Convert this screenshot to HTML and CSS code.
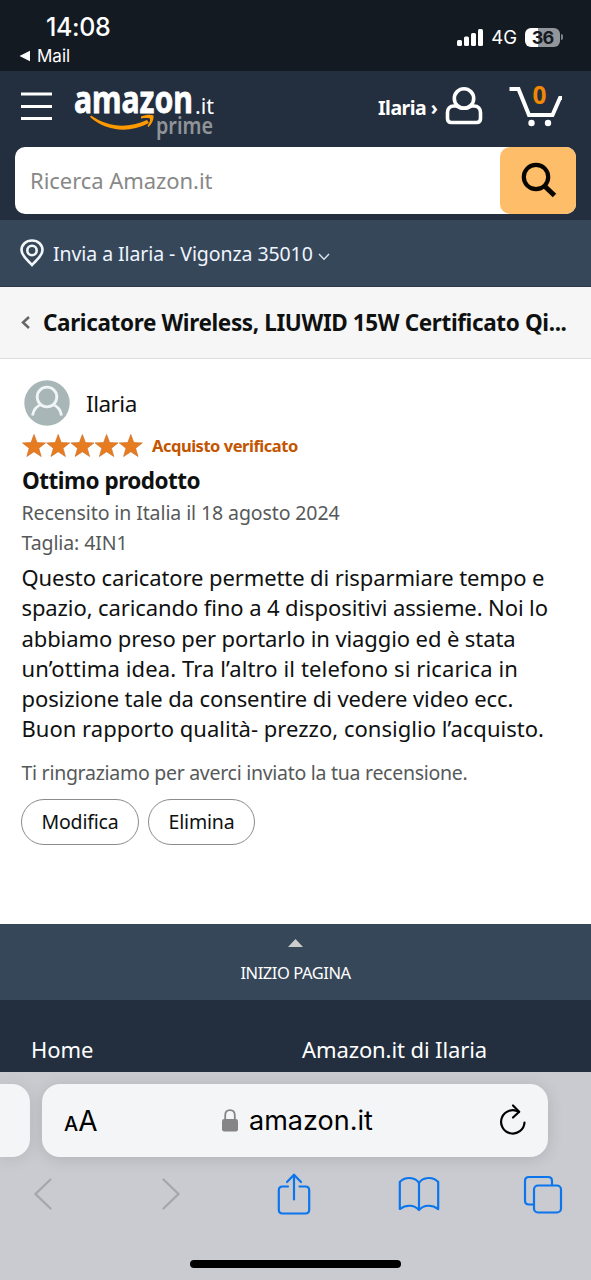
FILE: index.html
```html
<!DOCTYPE html>
<html lang="it">
<head>
<meta charset="utf-8">
<title>Amazon.it</title>
<link rel="stylesheet" href="styles.css">
</head>
<body>
<div class="status">
  <div class="status-left">
    <div class="clock">14:08</div>
    <div class="back-app"><svg width="12" height="12" viewBox="0 0 12 12"><path d="M0.5 6 L11 0.7 V11.3 Z" fill="#fff"/></svg><span>Mail</span></div>
  </div>
  <div class="status-right">
    <svg width="27" height="18" viewBox="0 0 27 18" fill="#fff"><rect x="0" y="12" width="5" height="6" rx="1.5"/><rect x="7" y="8.500" width="5" height="9.500" rx="1.500"/><rect x="14" y="5" width="5" height="13" rx="1.500"/><rect x="21" y="1" width="5" height="17" rx="1.500"/></svg>
    <span class="network">4G</span>
    <div class="battery"><span>36</span></div>
    <div class="battery-tip"></div>
  </div>
</div>

<header class="header">
  <div class="nav">
    <svg class="menu" width="31" height="29" viewBox="0 0 31 29" stroke="#fff" stroke-width="3"><path d="M0 2H31M0 14.500H31M0 26.500H31"/></svg>
    <svg class="logo" width="142" height="56" viewBox="0 0 142 56">
      <text class="logo-name" x="0" y="27" textLength="119" lengthAdjust="spacingAndGlyphs">amazon</text>
      <text class="logo-tld" x="121" y="28" textLength="19" lengthAdjust="spacingAndGlyphs">.it</text>
      <path d="M17 29.500C34 41 53 43 73 34L75 37C54 48 32 45 16 31Z" fill="#f90"/>
      <path d="M67 30.500C72 28.500 77 28.500 79.500 29.500C80 33 78 38 74.500 41L73.500 40C75.500 37 76.500 34 76 32.500C73.500 31.800 70 32 67 32.500Z" fill="#f90"/>
      <text class="logo-prime" x="82" y="48" textLength="57" lengthAdjust="spacingAndGlyphs">prime</text>
    </svg>
    <div class="account">Ilaria ›</div>
    <svg class="user" width="38" height="40" viewBox="0 0 38 40" fill="none" stroke="#fff" stroke-width="3.600"><circle cx="19" cy="12.500" r="9.700"/><path d="M11.500 20H9C5 20 2.500 22.500 2.500 26.500V32.500C2.500 35 4 36.500 6.500 36.500H31.500C34 36.500 35.500 35 35.500 32.500V26.500C35.500 22.500 33 20 29 20H26.500C22 22.700 16 22.700 11.500 20Z"/></svg>
    <svg class="cart" width="54" height="44" viewBox="0 0 54 44"><path d="M0.500 5H9.500L20 31H43.500L51 14H53" fill="none" stroke="#fff" stroke-width="4"/><circle cx="22.500" cy="39" r="3.200" fill="#fff"/><circle cx="39" cy="39" r="3.200" fill="#fff"/><text class="cart-count" x="23.500" y="20" textLength="14" lengthAdjust="spacingAndGlyphs">0</text></svg>
  </div>
  <div class="search">
    <span class="placeholder">Ricerca Amazon.it</span>
    <div class="search-button"><svg width="36" height="37" viewBox="0 0 36 37" fill="none" stroke="#080600"><circle cx="15" cy="15" r="12.200" stroke-width="4.200"/><path d="M23.500 24L33.500 33.500" stroke-width="5"/></svg></div>
  </div>
</header>

<div class="location">
  <svg width="24" height="28" viewBox="0 0 24 28" fill="none" stroke="#f2f7fa" stroke-width="2.600"><path d="M12 26C8 21.500 1.500 17 1.500 11C1.500 5.500 6 1.500 12 1.500S22.500 5.500 22.500 11C22.500 17 16 21.500 12 26Z"/><circle cx="12" cy="11.500" r="4.700"/></svg>
  <span class="location-text">Invia a Ilaria - Vigonza 35010</span>
  <svg class="chevron" width="12" height="8" viewBox="0 0 12 8" fill="none" stroke="#dce6f2" stroke-width="1.400"><path d="M1 1L6 6.300L11 1"/></svg>
</div>

<div class="product">
  <svg width="9" height="13" viewBox="0 0 9 13" fill="none" stroke="#666" stroke-width="2.500"><path d="M8 1L2 6.500L8 12"/></svg>
  <h1 class="product-title">Caricatore Wireless, LIUWID 15W Certificato Qi...</h1>
</div>

<main class="review">
  <div class="profile">
    <svg width="46" height="46" viewBox="0 0 46 46"><circle cx="23" cy="23" r="22.700" fill="#a8b6b8"/><g fill="none" stroke="#f0f6f7" stroke-width="2.800"><circle cx="23" cy="17" r="9.800"/><path d="M8.500 35.500C9.500 30 12.500 26 17.500 24.500M37.500 35.500C36.500 30 33.500 26 28.500 24.500"/></g></svg>
    <span class="name">Ilaria</span>
  </div>
  <div class="rating">
    <svg width="122" height="24" viewBox="0 0 122 24"><defs><path id="star" d="M12 0.500L15 8.600L23.500 8.900L16.800 14.200L19.200 22.500L12 17.700L4.800 22.500L7.200 14.200L0.500 8.900L9 8.600Z"/></defs><g fill="#e77b20" stroke="#cf7329" stroke-width=".7"><use href="#star"/><use href="#star" x="24.200"/><use href="#star" x="48.400"/><use href="#star" x="72.600"/><use href="#star" x="96.800"/></g></svg>
    <span class="verified">Acquisto verificato</span>
  </div>
  <h2 class="review-title">Ottimo prodotto</h2>
  <div class="meta date">Recensito in Italia il 18 agosto 2024</div>
  <div class="meta size">Taglia: 4IN1</div>
  <p class="body">Questo caricatore permette di risparmiare tempo e<br>spazio, caricando fino a 4 dispositivi assieme. Noi lo<br>abbiamo preso per portarlo in viaggio ed è stata<br><span class="loose">un’ottima idea. Tra l’altro il telefono si ricarica in</span><br>posizione tale da consentire di vedere video ecc.<br><span class="even">Buon rapporto qualità- prezzo, consiglio l’acquisto.</span></p>
  <div class="thanks">Ti ringraziamo per averci inviato la tua recensione.</div>
  <div class="actions"><button class="edit">Modifica</button><button class="delete">Elimina</button></div>
</main>

<div class="top-link">
  <svg width="15" height="8" viewBox="0 0 15 8"><path d="M0 8L7.500 0L15 8Z" fill="#ccc"/></svg>
  <span>INIZIO PAGINA</span>
</div>
<footer class="footer"><span class="home">Home</span><span class="yours">Amazon.it di Ilaria</span></footer>

<div class="browser">
  <div class="tabs">
    <div class="prev-tab"></div>
    <div class="address">
      <span class="text-size"><small>A</small>A</span>
      <div class="host"><svg width="16" height="23" viewBox="0 0 16 23"><path d="M3.200 11V6.500C3.200 3 5 1.200 8 1.200S12.800 3 12.800 6.500V11" fill="none" stroke="#858587" stroke-width="1.800"/><rect x="0" y="10" width="16" height="12.500" rx="2.200" fill="#858587"/></svg><span>amazon.it</span></div>
      <svg class="reload" width="26" height="31" viewBox="0 0 26 31" fill="none" stroke="#000" stroke-width="2.200" stroke-linecap="round" stroke-linejoin="round"><path d="M24.500 18.500A11.700 11.700 0 1 1 19 7.900"/><path d="M13 1.500L19.200 7.700L13 13.500"/></svg>
    </div>
  </div>
  <div class="toolbar">
    <svg width="18" height="32" viewBox="0 0 18 32" fill="none" stroke="#a5a7ac" stroke-width="2.300" stroke-linecap="round"><path d="M16.500 1.500L1.500 16L16.500 30.500"/></svg>
    <svg class="forward" width="18" height="32" viewBox="0 0 18 32" fill="none" stroke="#a5a7ac" stroke-width="2.300" stroke-linecap="round"><path d="M1.500 1.500L16.500 16L1.500 30.500"/></svg>
    <svg class="share" width="34" height="42" viewBox="0 0 34 42" fill="none" stroke="#0b75ed" stroke-width="2.200" stroke-linecap="round" stroke-linejoin="round"><path d="M11 13.500H5.500C3 13.500 1.800 15 1.800 17.500V36.500C1.800 39 3 40.500 5.500 40.500H28.500C31 40.500 32.200 39 32.200 36.500V17.500C32.200 15 31 13.500 28.500 13.500H22.500M17 26.500V1.800M10 9L17 1.800L24 9"/></svg>
    <svg class="book" width="42" height="36" viewBox="0 0 42 36" fill="none" stroke="#0b75ed" stroke-width="2.200" stroke-linejoin="round"><path d="M21 7C17 0.700 7 0.300 1.800 6V33C8 28.500 16 28.500 21 34C26 28.500 34 28.500 40.200 33V6C35 0.300 25 0.700 21 7V34"/></svg>
    <svg class="pages" width="40" height="39" viewBox="0 0 40 39" fill="none" stroke="#0b75ed" stroke-width="2.200"><rect x="11" y="10.500" width="27" height="27" rx="4"/><path d="M11 29.500H6C3.300 29.500 2 28.200 2 25.500V6C2 3.300 3.300 2 6 2H25C27.700 2 29 3.300 29 6V10.500"/></svg>
  </div>
  <div class="home-bar"></div>
</div>
</body>
</html>
```

FILE: styles.css
```css
* { box-sizing: border-box; }
body { margin: 0; width: 591px; height: 1280px; overflow: hidden; background: #fff; color: #0f1111; font-family: "Noto Sans", "Open Sans", sans-serif; white-space: nowrap; }
svg { display: block; flex: none; overflow: visible; }
h1, h2, p { margin: 0; }

.status { display: flex; justify-content: space-between; height: 71px; background: #141a22; color: #fff; font-family: Inter, sans-serif; }
.status-left { padding: 11px 0 0 19px; }
.clock { height: 32px; padding-left: 27px; font-size: 25px; line-height: 32px; font-weight: 500; letter-spacing: -0.4px; }
.back-app { display: flex; align-items: center; gap: 6px; height: 26px; font-size: 17px; }
.status-right { display: flex; align-items: center; height: 18px; margin: 28px 28px 0 0; }
.network { margin-left: 7px; font-size: 18.500px; }
.battery { width: 35px; height: 19px; margin-left: 8px; border-radius: 6px; background: linear-gradient(to right, #fff 36%, #92959a 36%); color: #141a22; text-align: center; font-size: 18px; line-height: 19px; font-weight: 700; letter-spacing: -0.8px; }
.battery-tip { width: 2px; height: 6px; margin-left: 1px; border-radius: 0 2px 2px 0; background: #80838a; }

.header { height: 149px; background: #232f3e; }
.nav { display: flex; align-items: flex-start; height: 76px; color: #fff; }
.menu { margin: 21px 0 0 21px; }
.logo { margin: 15px 0 0 22px; }
.logo text { font-family: "Noto Sans", sans-serif; font-weight: 700; fill: #fff; }
.logo .logo-name { font-size: 37px; stroke: #fff; stroke-width: 0.8px; }
.logo .logo-tld { font-size: 21px; font-weight: 400; }
.logo .logo-prime { font-size: 23px; font-weight: 600; fill: #909398; }
.account { width: 60px; margin: 23px 0 0 162px; font-size: 19.500px; line-height: 28px; font-weight: 700; letter-spacing: -0.5px; }
.user { margin: 15px 0 0 7px; }
.cart { margin: 13px 0 0 26px; }
.cart-count { font-size: 25px; font-weight: 700; fill: #f08804; }
.search { display: flex; justify-content: space-between; height: 67px; margin: 0 15px; border-radius: 10px; background: #fff; }
.placeholder { padding-left: 15px; color: #888; font-size: 22px; line-height: 67px; letter-spacing: -0.05px; }
.search-button { display: flex; width: 76px; padding: 15px 0 0 21px; border-radius: 10px; background: #febd69; }

.location { display: flex; align-items: center; height: 67px; padding-left: 20px; border-bottom: 1px solid #2b394a; background: #37475a; color: #eef5ff; }
.location-text { margin-left: 9px; font-size: 19.500px; letter-spacing: -0.08px; }
.chevron { margin: 8px 0 0 5px; }
.product { display: flex; align-items: center; height: 72px; padding-left: 21px; border-bottom: 1px solid #ddd; background: #f6f6f6; }
.product-title { margin-left: 13px; font-size: 22.500px; font-weight: 700; letter-spacing: -0.37px; }

.review { height: 565px; padding: 21px 22px 0; }
.profile { display: flex; align-items: center; height: 46px; padding-left: 2px; }
.name { margin-left: 16px; font-size: 22.500px; letter-spacing: -0.5px; }
.rating { display: flex; align-items: center; height: 24px; margin-top: 8px; }
.verified { margin: -1px 0 0 8px; color: #c45500; font-size: 16.500px; font-weight: 700; letter-spacing: -0.48px; }
.review-title { height: 32px; margin-top: 7px; font-size: 22.500px; line-height: 32px; font-weight: 700; letter-spacing: -0.5px; }
.meta { height: 30px; margin-left: -0.5px; color: #565959; font-size: 19.500px; line-height: 32px; letter-spacing: -0.1px; }
.body { margin-top: 5px; margin-left: -0.5px; font-size: 22px; line-height: 30.300px; letter-spacing: -0.1px; }
.body .loose { letter-spacing: 0.12px; }
.body .even { letter-spacing: 0.02px; }
.thanks { height: 30px; margin-top: 14px; margin-left: -0.5px; color: #565959; font-size: 19.500px; line-height: 30px; letter-spacing: -0.28px; }
.actions { display: flex; gap: 9px; margin-top: 11px; margin-left: -1px; }
.actions button { height: 46px; padding: 0; border: 1.500px solid #888c8c; border-radius: 23px; background: #fff; color: #0f1111; font: 19.500px "Noto Sans", sans-serif; letter-spacing: -0.2px; }
.actions .edit { width: 118px; }
.actions .delete { width: 107px; }

.top-link { display: flex; flex-direction: column; align-items: center; height: 76px; padding-top: 15px; background: #37475a; color: #fff; font-size: 16.500px; letter-spacing: -0.45px; }
.top-link span { margin-top: 14px; line-height: 24px; }
.footer { display: grid; grid-template-columns: 271px 1fr; height: 72px; padding: 34px 0 0 31px; background: #232f3e; color: #fff; font-size: 22px; line-height: 30px; letter-spacing: -0.1px; }

.browser { height: 208px; overflow: hidden; background: #c9cbd0; font-family: Inter, sans-serif; }
.tabs { display: flex; height: 85px; padding-top: 12px; }
.prev-tab { width: 30px; height: 73px; border-radius: 0 18px 18px 0; background: #f4f5f6; box-shadow: 0 2px 16px #00000018; }
.address { display: flex; align-items: center; width: 506px; height: 73px; margin-left: 12px; padding: 0 22px; border-radius: 18px; background: #f4f5f6; box-shadow: 0 2px 16px #00000020; color: #000; }
.text-size { width: 34px; font-size: 28px; }
.text-size small { font-size: 20px; font-weight: 500; }
.host { display: flex; align-items: center; gap: 11px; margin-left: 124px; font-size: 27px; }
.reload { margin: -3px 0 0 auto; }
.toolbar { display: flex; align-items: center; height: 74px; padding-left: 34px; }
.forward { margin-left: 110px; }
.share { margin-left: 97px; }
.book { margin-left: 87px; }
.pages { margin-left: 83px; }
.home-bar { width: 211px; height: 8px; margin: 29px 0 0 190px; border-radius: 4px; background: #000; }
```
